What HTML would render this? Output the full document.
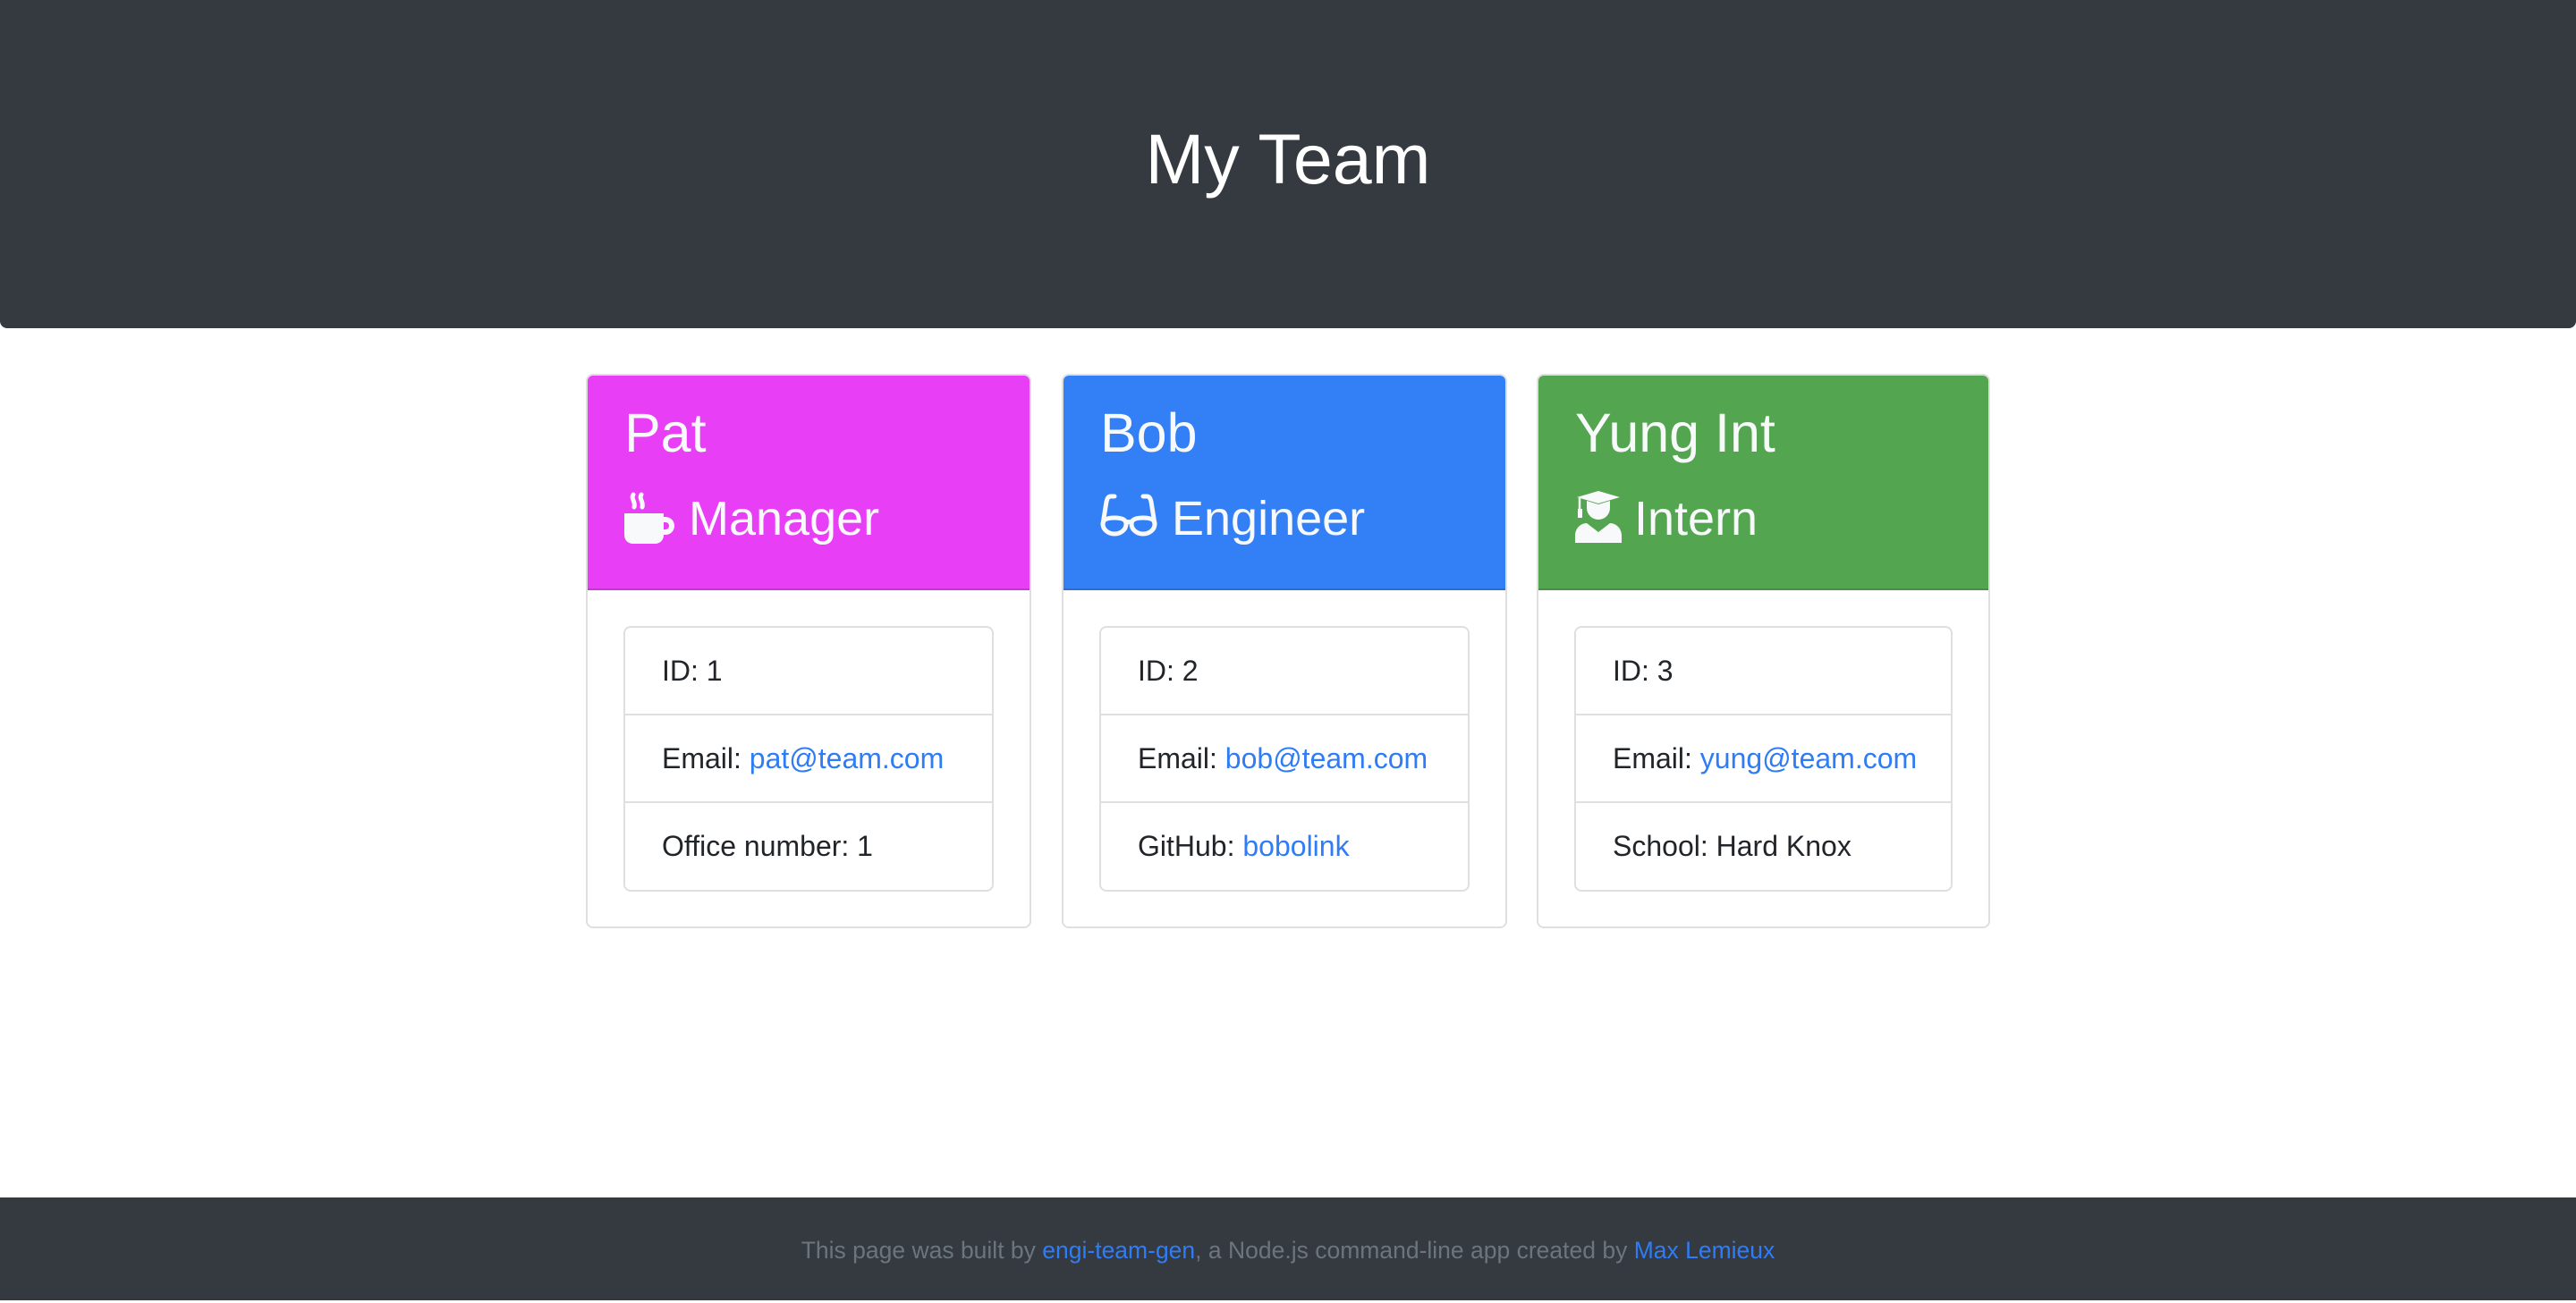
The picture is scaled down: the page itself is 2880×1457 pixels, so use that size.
<!DOCTYPE html>
<html><head><meta charset="utf-8"><style>
*{margin:0;padding:0;box-sizing:border-box}
body{width:2880px;height:1454px;background:#fff;font-family:"Liberation Sans",Helvetica,Arial,sans-serif;position:relative;overflow:hidden;color:#212529}
.hdr{position:absolute;left:0;top:0;width:2880px;height:367px;background:#343a40;border-radius:0 0 8px 8px}
.hdr h1{position:absolute;left:0;right:0;top:128px;text-align:center;color:#fff;font-weight:400;font-size:79px;line-height:100px}
.card{position:absolute;top:418px;height:620px;border:2px solid #dfdfdf;border-radius:8px;overflow:hidden}
.ch{position:absolute;left:0;right:0;top:0;height:240px;color:#f8f9fa;border-bottom:2px solid rgba(0,0,0,.13)}
.name{position:absolute;left:41px;top:24px;font-size:61px;line-height:80px}
.role{position:absolute;left:41px;top:120px;font-size:54px;line-height:80px;white-space:nowrap}
.role svg{position:absolute;top:0}
.lg{position:absolute;left:40px;right:40px;top:280px;height:297px;border:2px solid #dfdfdf;border-radius:8px}
.li{height:98px;border-bottom:2px solid #dfdfdf;font-size:32px;line-height:96px;padding-left:41px}
.li:last-child{border-bottom:none}
a{color:#2f7cf6;text-decoration:none}
.ft{position:absolute;left:0;top:1339px;width:2880px;height:115px;background:#343a40;text-align:center;color:#6c757d;font-size:26.5px;line-height:118px}
</style></head><body>
<div class="hdr"><h1>My Team</h1></div>

<div class="card" style="left:655px;width:498px">
 <div class="ch" style="background:#e83ef5">
  <div class="name">Pat</div>
  <div class="role"><svg style="left:0;top:10px" width="58" height="58" viewBox="0 0 58 58"><g stroke="#f8f9fa" stroke-width="5" stroke-linecap="round" fill="none"><path d="M10 3c-3 5 3 8 1 14"/><path d="M19 3c-3 5 3 8 1 14"/></g><path d="M0 24h44v24c0 6-4 10-10 10H10C4 58 0 54 0 48z" fill="#f8f9fa"/><path d="M40 28h6a10 10 0 0 1 0 20h-6v-6h6a4 4 0 0 0 0-8h-6z" fill="#f8f9fa"/></svg><span style="position:absolute;left:72px">Manager</span></div>
 </div>
 <div class="lg"><div class="li">ID: 1</div><div class="li">Email: <a>pat@team.com</a></div><div class="li">Office number: 1</div></div>
</div>

<div class="card" style="left:1187px;width:498px">
 <div class="ch" style="background:#327ff6">
  <div class="name">Bob</div>
  <div class="role"><svg style="left:0;top:12px" width="64" height="50" viewBox="0 0 64 50"><g stroke="#f8f9fa" stroke-width="5" fill="none" stroke-linecap="round"><path d="M16 3h-4c-3 0-4 2-5 6L3 34"/><path d="M48 3h4c3 0 4 2 5 6l4 25"/><path d="M3 34a13 11 0 0 0 26 0c0-5-4-7-13-7S3 29 3 34z"/><path d="M35 34a13 11 0 0 0 26 0c0-5-4-7-13-7s-13 2-13 7z"/><path d="M29 33q3-3 6 0"/></g></svg><span style="position:absolute;left:80px">Engineer</span></div>
 </div>
 <div class="lg"><div class="li">ID: 2</div><div class="li">Email: <a>bob@team.com</a></div><div class="li">GitHub: <a>bobolink</a></div></div>
</div>

<div class="card" style="left:1718px;width:507px">
 <div class="ch" style="background:#54a550">
  <div class="name">Yung Int</div>
  <div class="role"><svg style="left:0;top:9px" width="52" height="58" viewBox="0 0 52 58"><path d="M26 0L50 7 26 14 2 7z" fill="#f8f9fa"/><path d="M13 11v8a13 13 0 0 0 26 0v-8l-13 4z" fill="#f8f9fa"/><path d="M5 8v14" stroke="#f8f9fa" stroke-width="2.5"/><rect x="3" y="20" width="5" height="10" fill="#f8f9fa"/><path d="M0 58v-8c0-8 6-14 13-14l13 10 13-10c7 0 13 6 13 14v8z" fill="#f8f9fa"/></svg><span style="position:absolute;left:66px">Intern</span></div>
 </div>
 <div class="lg"><div class="li">ID: 3</div><div class="li">Email: <a>yung@team.com</a></div><div class="li">School: Hard Knox</div></div>
</div>

<div class="ft">This page was built by <a>engi-team-gen</a>, a Node.js command-line app created by <a>Max Lemieux</a></div>
</body></html>
